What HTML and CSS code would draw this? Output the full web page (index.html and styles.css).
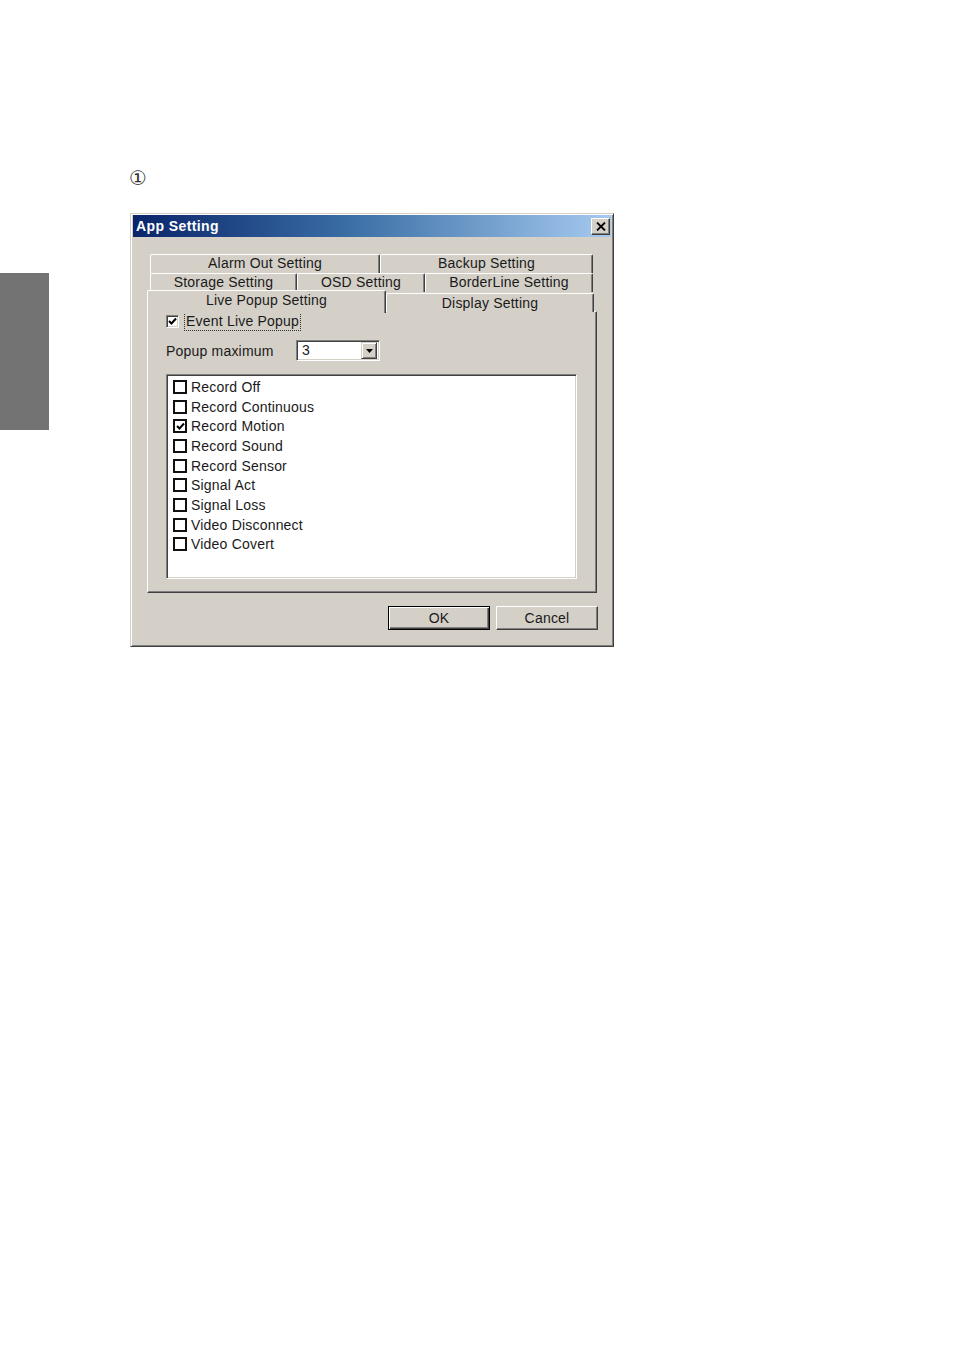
FILE: index.html
```html
<!DOCTYPE html>
<html>
<head>
<meta charset="utf-8">
<title>App Setting</title>
<link rel="stylesheet" href="styles.css">
</head>
<body>
<div class="page">
  <div class="side-tab"></div>
  <div class="content">
    <div class="marker">①</div>
    <div class="dialog">
      <div class="titlebar">
        <span class="title">App Setting</span>
        <span class="close">
          <svg width="10" height="9" viewBox="0 0 10 9"><path d="M1 0.5 L9 8.5 M9 0.5 L1 8.5" stroke="#000" stroke-width="1.8" fill="none"/></svg>
        </span>
      </div>
      <div class="body">
        <div class="tabs">
          <div class="tab-row row-back">
            <div class="tab t-alarm">Alarm Out Setting</div>
            <div class="tab t-backup">Backup Setting</div>
          </div>
          <div class="tab-row row-back">
            <div class="tab t-storage">Storage Setting</div>
            <div class="tab t-osd">OSD Setting</div>
            <div class="tab t-border">BorderLine Setting</div>
          </div>
          <div class="tab-row row-front">
            <div class="tab t-live selected">Live Popup Setting</div>
            <div class="tab t-display">Display Setting</div>
          </div>
        </div>
        <div class="panel">
          <div class="event-row">
            <span class="cb3d">
              <svg width="9" height="9" viewBox="0 0 9 9"><path d="M1 4 L3.5 6.5 L8 1.5" stroke="#000" stroke-width="2" fill="none"/></svg>
            </span>
            <span class="focus-label">Event Live Popup</span>
          </div>
          <div class="max-row">
            <span class="max-label">Popup maximum</span>
            <div class="combo">
              <span class="combo-value">3</span>
              <span class="combo-btn">
                <svg width="7" height="4" viewBox="0 0 7 4"><path d="M0 0 H7 L3.5 4 Z" fill="#000"/></svg>
              </span>
            </div>
          </div>
          <div class="listbox">
            <div class="item"><span class="cb"></span>Record Off</div>
            <div class="item"><span class="cb"></span>Record Continuous</div>
            <div class="item"><span class="cb"><svg width="9" height="9" viewBox="0 0 9 9"><path d="M1 4 L3.5 6.5 L8 1.5" stroke="#000" stroke-width="2" fill="none"/></svg></span>Record Motion</div>
            <div class="item"><span class="cb"></span>Record Sound</div>
            <div class="item"><span class="cb"></span>Record Sensor</div>
            <div class="item"><span class="cb"></span>Signal Act</div>
            <div class="item"><span class="cb"></span>Signal Loss</div>
            <div class="item"><span class="cb"></span>Video Disconnect</div>
            <div class="item"><span class="cb"></span>Video Covert</div>
          </div>
        </div>
        <div class="buttons">
          <div class="btn default"><span class="btn-face">OK</span></div>
          <div class="btn"><span class="btn-face">Cancel</span></div>
        </div>
      </div>
    </div>
  </div>
</div>
</body>
</html>
```

FILE: styles.css
```css
html, body {
  margin: 0;
  padding: 0;
  background: #fff;
}

body {
  font-family: "Liberation Sans", Arial, sans-serif;
  font-size: 14px;
  letter-spacing: 0.2px;
  color: #1a1a1a;
}

.page {
  display: flex;
  align-items: flex-start;
  min-height: 1348px;
}

.side-tab {
  flex-shrink: 0;
  width: 49px;
  height: 157px;
  margin-top: 273px;
  background: #737373;
}

.content {
  margin-left: 81px;
  padding-top: 166px;
}

.marker {
  font-family: "DejaVu Sans", sans-serif;
  font-size: 20px;
  line-height: 24px;
  height: 24px;
  color: #333;
  margin-left: -1px;
  margin-bottom: 23px;
  letter-spacing: 0;
}

.dialog {
  box-sizing: border-box;
  width: 484px;
  height: 434px;
  background: #d4d0c8;
  border: 1px solid;
  border-color: #d4d0c8 #404040 #404040 #d4d0c8;
  box-shadow: inset 1px 1px 0 #fff, inset -1px -1px 0 #808080;
  padding: 1px 2px 2px 2px;
  display: flex;
  flex-direction: column;
}

.titlebar {
  height: 22px;
  background: linear-gradient(to right, #0a246a, #3a6ea5 45%, #a6caf0);
  display: flex;
  align-items: center;
  justify-content: space-between;
  padding: 0 1px 0 3px;
}

.title {
  color: #fff;
  font-weight: bold;
  font-size: 14px;
  letter-spacing: 0.4px;
}

.close {
  box-sizing: border-box;
  width: 19px;
  height: 17px;
  background: #d4d0c8;
  border: 1px solid;
  border-color: #fff #404040 #404040 #fff;
  box-shadow: inset -1px -1px 0 #808080;
  display: flex;
  align-items: center;
  justify-content: center;
}

.body {
  padding: 17px 14px 0 14px;
  display: flex;
  flex-direction: column;
}

.tabs {
  display: flex;
  flex-direction: column;
}

.tab-row {
  display: flex;
  height: 19px;
}

.row-back {
  padding: 0 3px;
}

.row-front {
  padding: 0 2px 0 0;
  position: relative;
  z-index: 2;
}

.tab {
  box-sizing: border-box;
  height: 19px;
  line-height: 17px;
  text-align: center;
  background: #d4d0c8;
  border-top: 1px solid #fff;
  border-left: 1px solid #fff;
  border-right: 1px solid #404040;
  box-shadow: inset -1px 0 0 #808080;
  border-radius: 2px 2px 0 0;
  white-space: nowrap;
}

.t-alarm { width: 230px; }
.t-backup { width: 213px; }
.t-storage { width: 147px; }
.t-osd { width: 128px; }
.t-border { width: 168px; }
.t-live { width: 239px; }
.t-display { width: 208px; height: 19px; line-height: 18px; margin-top: 1px; }

.tab.selected {
  height: 23px;
  margin-top: -2px;
  line-height: 19px;
  position: relative;
  z-index: 3;
}

.panel {
  box-sizing: border-box;
  height: 282px;
  border: 1px solid;
  border-color: #fff #404040 #404040 #fff;
  box-shadow: inset -1px -1px 0 #808080;
  padding: 0 0 0 18px;
  display: flex;
  flex-direction: column;
  position: relative;
  z-index: 1;
}

.event-row {
  display: flex;
  align-items: center;
  height: 18px;
}

.cb3d {
  box-sizing: border-box;
  width: 13px;
  height: 13px;
  background: #fff;
  border: 1px solid;
  border-color: #808080 #fff #fff #808080;
  box-shadow: inset 1px 1px 0 #404040, inset -1px -1px 0 #d4d0c8;
  display: flex;
  align-items: center;
  justify-content: center;
  margin-right: 6px;
}

.focus-label {
  outline: 1px dotted #333;
  outline-offset: 0;
  padding: 0 1px;
  line-height: 17px;
}

.max-row {
  display: flex;
  align-items: center;
  margin-top: 10px;
  height: 21px;
}

.max-label {
  width: 130px;
}

.combo {
  box-sizing: border-box;
  width: 84px;
  height: 21px;
  background: #fff;
  border: 1px solid;
  border-color: #808080 #fff #fff #808080;
  box-shadow: inset 1px 1px 0 #404040, inset -1px -1px 0 #d4d0c8;
  display: flex;
  align-items: center;
  justify-content: space-between;
  padding: 2px;
}

.combo-value {
  padding-left: 3px;
  line-height: 15px;
}

.combo-btn {
  box-sizing: border-box;
  width: 16px;
  height: 17px;
  background: #d4d0c8;
  border: 1px solid;
  border-color: #d4d0c8 #404040 #404040 #d4d0c8;
  box-shadow: inset 1px 1px 0 #fff, inset -1px -1px 0 #808080;
  display: flex;
  align-items: center;
  justify-content: center;
}

.listbox {
  box-sizing: border-box;
  width: 411px;
  height: 205px;
  margin-top: 13px;
  background: #fff;
  border: 1px solid;
  border-color: #808080 #fff #fff #808080;
  box-shadow: inset 1px 1px 0 #404040, inset -1px -1px 0 #d4d0c8;
  padding: 2px 0 0 6px;
}

.item {
  display: flex;
  align-items: center;
  height: 19.7px;
  white-space: nowrap;
}

.cb {
  box-sizing: border-box;
  width: 14px;
  height: 14px;
  border: 2px solid #111;
  background: #fff;
  margin-right: 4px;
  display: flex;
  align-items: center;
  justify-content: center;
}

.buttons {
  display: flex;
  justify-content: flex-end;
  gap: 6px;
  margin-top: 13px;
  margin-right: -1px;
}

.btn {
  box-sizing: border-box;
  width: 102px;
  height: 24px;
  background: #d4d0c8;
  border: 1px solid;
  border-color: #fff #404040 #404040 #fff;
  box-shadow: inset -1px -1px 0 #808080;
  display: flex;
  align-items: center;
  justify-content: center;
}

.btn.default {
  border: 1px solid #000;
  box-shadow: inset 1px 1px 0 #fff, inset -1px -1px 0 #404040, inset -2px -2px 0 #808080;
}

.btn-face {
  line-height: 18px;
}
```
